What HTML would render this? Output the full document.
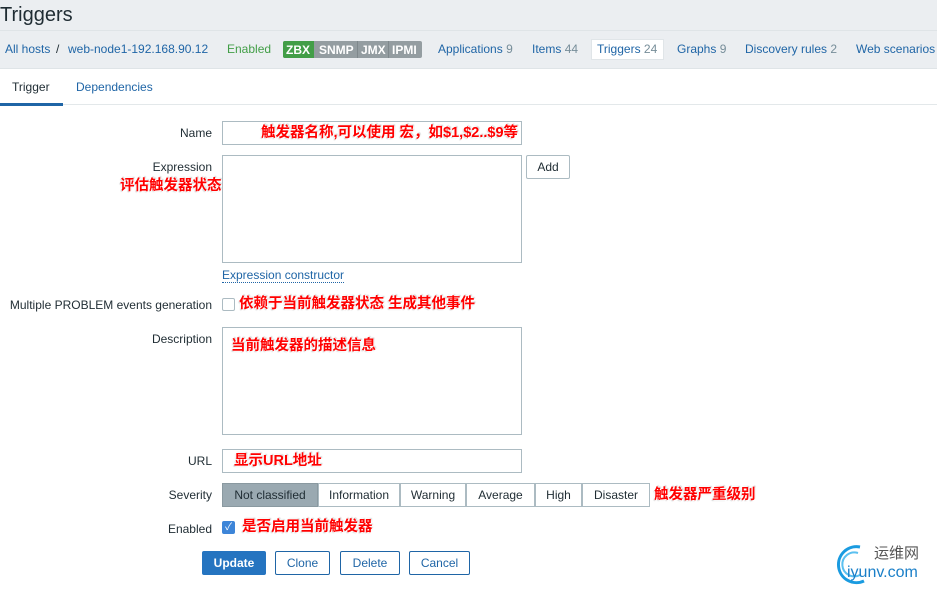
<!DOCTYPE html>
<html><head><meta charset="utf-8"><style>
*{margin:0;padding:0;box-sizing:border-box}
body{width:937px;height:590px;background:#fff;font-family:"Liberation Sans","Noto Sans CJK SC",sans-serif;font-size:12px;color:#1f2c33;position:relative;overflow:hidden}
.a{position:absolute;white-space:nowrap}
.hdr{position:absolute;left:0;top:0;width:937px;height:69px;background:#ebeef1;border-bottom:1px solid #dfe4e7}
.lnk{color:#1f65a6}
.cnt{color:#768d99}
.lbl{position:absolute;right:725px;text-align:right;white-space:nowrap}
.inp{position:absolute;left:222px;width:300px;border:1px solid #acbbc2;background:#fff}
.red{position:absolute;color:#f00;font-weight:bold;font-size:14.5px;line-height:16px;white-space:nowrap;text-shadow:0 0 2px #fff,1px 1px 1px #fff,-1px -1px 1px #fff,1px -1px 1px #ccc,-1px 1px 1px #ccc}
.btn{position:absolute;top:551px;height:24px;border:1px solid #1f65a6;color:#1f65a6;background:#fff;border-radius:2px;text-align:center;line-height:22px}
.sev{position:absolute;top:483px;height:24px;border:1px solid #acbbc2;line-height:22px;text-align:center;background:#fff;margin-left:-1px}
.cb{position:absolute;left:222px;width:13px;height:13px;border:1px solid #acbbc2;border-radius:2px;background:#fff}
</style></head><body>
<div class="hdr"></div>
<div class="a" style="left:0;top:4px;font-size:20px;color:#1f2c33">Triggers</div>
<div class="a" style="left:0;top:30px;width:937px;height:1px;background:#dfe4e7"></div>
<div class="a lnk" style="left:5px;top:42px">All hosts</div>
<div class="a" style="left:56px;top:42px">/</div>
<div class="a lnk" style="left:68px;top:42px">web-node1-192.168.90.12</div>
<div class="a" style="left:227px;top:42px;color:#429e47">Enabled</div>
<div class="a" style="left:283px;top:41px;height:17px;width:139px;background:#949da1;border-radius:2px"></div>
<div class="a" style="left:283px;top:41px;height:17px;width:31px;background:#429e47;border-radius:2px 0 0 2px"></div>
<div class="a" style="left:286px;top:43px;color:#fff;font-weight:bold">ZBX</div>
<div class="a" style="left:319px;top:43px;color:#fff;font-weight:bold">SNMP</div>
<div class="a" style="left:357px;top:41px;width:1px;height:17px;background:#7f888c"></div>
<div class="a" style="left:361px;top:43px;color:#fff;font-weight:bold">JMX</div>
<div class="a" style="left:388px;top:41px;width:1px;height:17px;background:#7f888c"></div>
<div class="a" style="left:392px;top:43px;color:#fff;font-weight:bold">IPMI</div>
<div class="a" style="left:438px;top:42px"><span class="lnk">Applications</span> <span class="cnt">9</span></div>
<div class="a" style="left:532px;top:42px"><span class="lnk">Items</span> <span class="cnt">44</span></div>
<div class="a" style="left:591px;top:39px;width:73px;height:21px;background:#fff;border:1px solid #e0e5e8"></div>
<div class="a" style="left:597px;top:42px"><span class="lnk">Triggers</span> <span class="cnt">24</span></div>
<div class="a" style="left:677px;top:42px"><span class="lnk">Graphs</span> <span class="cnt">9</span></div>
<div class="a" style="left:745px;top:42px"><span class="lnk">Discovery rules</span> <span class="cnt">2</span></div>
<div class="a lnk" style="left:856px;top:42px">Web scenarios</div>
<div class="a" style="left:12px;top:80px">Trigger</div>
<div class="a lnk" style="left:76px;top:80px">Dependencies</div>
<div class="a" style="left:0;top:104px;width:937px;height:1px;background:#e3e8ea"></div>
<div class="a" style="left:0;top:103px;width:63px;height:3px;background:#1f65a6"></div>

<div class="lbl" style="top:126px">Name</div>
<div class="inp" style="top:121px;height:24px"></div>
<div class="red" style="left:261px;top:125px">触发器名称,可以使用 宏，如$1,$2..$9等</div>

<div class="lbl" style="top:160px">Expression</div>
<div class="red" style="left:120px;top:178px">评估触发器状态</div>
<div class="inp" style="top:155px;height:108px"></div>
<div class="btn" style="left:526px;top:155px;width:44px;border-color:#acbbc2;color:#1f2c33">Add</div>
<div class="a lnk" style="left:222px;top:268px;border-bottom:1px dotted #1f65a6">Expression constructor</div>

<div class="lbl" style="top:298px">Multiple PROBLEM events generation</div>
<div class="cb" style="top:298px"></div>
<div class="red" style="left:239px;top:296px">依赖于当前触发器状态 生成其他事件</div>

<div class="lbl" style="top:332px">Description</div>
<div class="inp" style="top:327px;height:108px"></div>
<div class="red" style="left:231px;top:338px">当前触发器的描述信息</div>

<div class="lbl" style="top:454px">URL</div>
<div class="inp" style="top:449px;height:24px"></div>
<div class="red" style="left:234px;top:453px">显示URL地址</div>

<div class="lbl" style="top:488px">Severity</div>
<div class="sev" style="left:223px;width:96px;background:#9aa9b1;border-color:#8a99a0;color:#1f2c33">Not classified</div>
<div class="sev" style="left:319px;width:82px">Information</div>
<div class="sev" style="left:401px;width:66px">Warning</div>
<div class="sev" style="left:467px;width:69px">Average</div>
<div class="sev" style="left:536px;width:47px">High</div>
<div class="sev" style="left:583px;width:68px">Disaster</div>
<div class="red" style="left:654px;top:487px">触发器严重级别</div>

<div class="lbl" style="top:522px">Enabled</div>
<div class="cb" style="top:521px;background:#3d85d8;border-color:#3d85d8;color:#fff;font-size:10px;line-height:11px;text-align:center">✓</div>
<div class="red" style="left:242px;top:519px">是否启用当前触发器</div>

<div class="btn" style="left:202px;width:64px;background:#2574c0;border-color:#2574c0;color:#fff;font-weight:bold">Update</div>
<div class="btn" style="left:275px;width:55px">Clone</div>
<div class="btn" style="left:340px;width:60px">Delete</div>
<div class="btn" style="left:409px;width:61px">Cancel</div>

<svg class="a" style="left:834px;top:543px" width="40" height="44" viewBox="0 0 40 44"><path d="M26 4 A18 18 0 1 0 30 38" fill="none" stroke="#1a9be0" stroke-width="3"/><path d="M24 10 A12 12 0 1 0 26 32" fill="none" stroke="#5bc0f0" stroke-width="2"/></svg>
<div class="a" style="left:874px;top:542px;font-size:15px;color:#555">运维网</div>
<div class="a" style="left:847px;top:564px;font-size:16px;color:#1a7fc8">iyunv.com</div>
</body></html>
